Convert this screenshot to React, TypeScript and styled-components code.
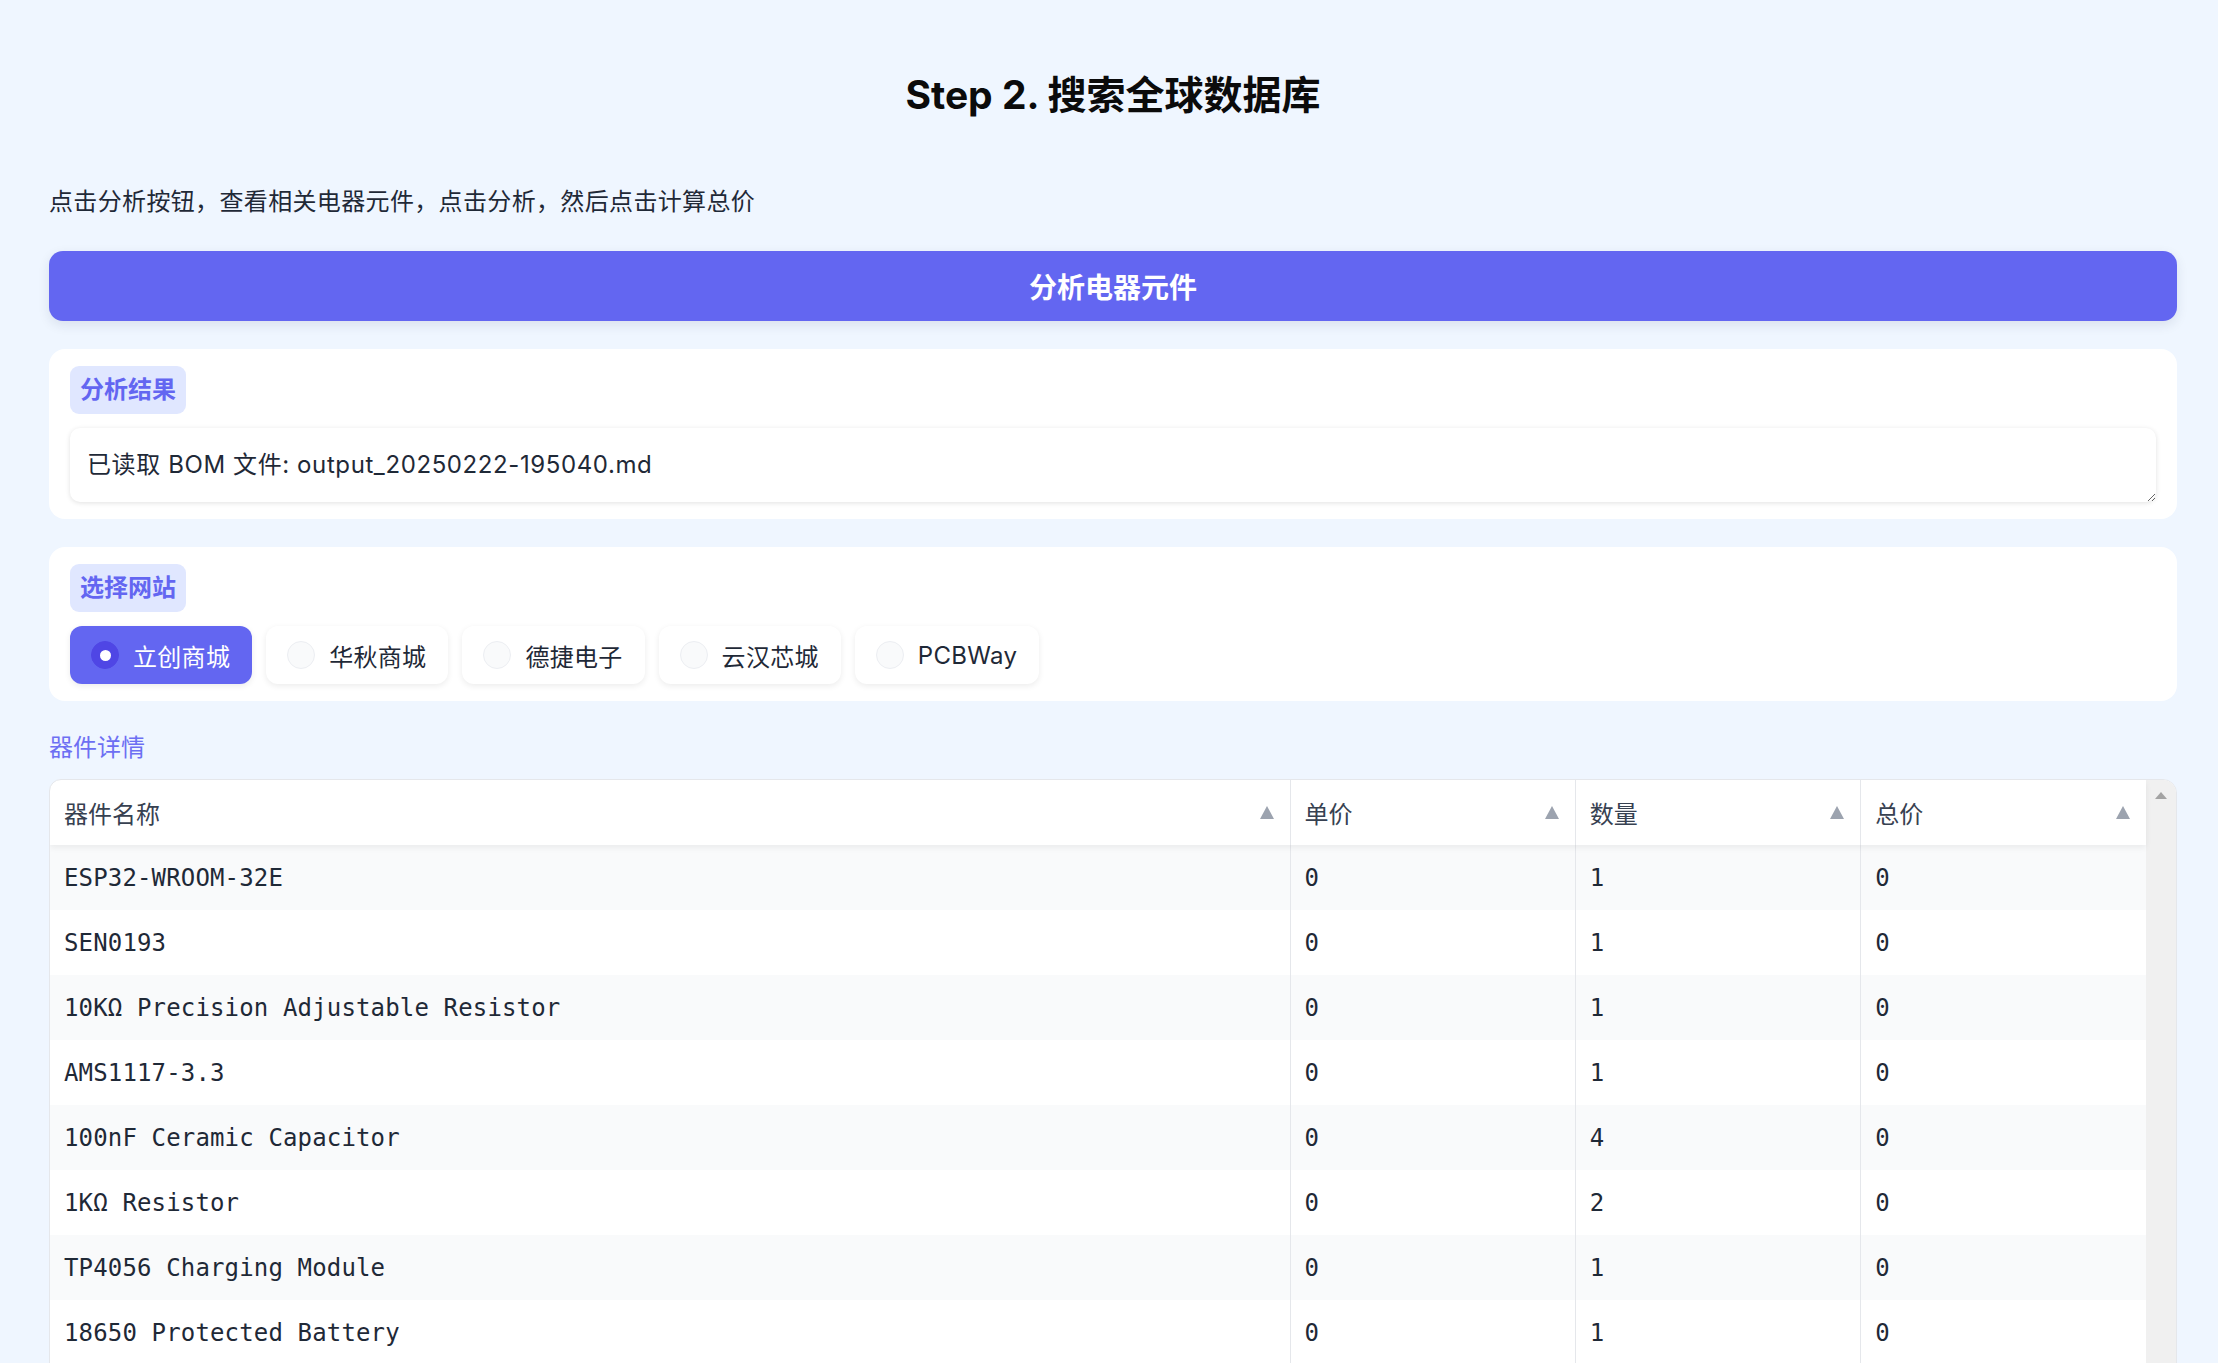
import styled, { createGlobalStyle } from "styled-components";

const GlobalStyle = createGlobalStyle`
  html, body {
    margin: 0;
    padding: 0;
    overflow: hidden;
    background: #eff6ff;
  }
  body {
    font-family: Inter, "Noto Sans CJK SC", sans-serif;
    color: #1f2937;
  }
  * {
    box-sizing: border-box;
  }
`;

const Page = styled.div`
  padding: 71px 41px 0 49px;
`;

const Title = styled.h1`
  margin: 0;
  text-align: center;
  font-size: 39px;
  line-height: 48px;
  font-weight: 700;
  color: #0b0b0b;
`;

const Intro = styled.p`
  margin: 67px 0 0;
  font-size: 24px;
  line-height: 32px;
  letter-spacing: 0.35px;
  color: #1f2937;
`;

const AnalyzeButton = styled.button`
  display: block;
  width: 100%;
  height: 70px;
  margin-top: 33px;
  border: none;
  border-radius: 14px;
  background: #6366f1;
  color: #fff;
  font-family: Inter, "Noto Sans CJK SC", sans-serif;
  font-size: 28px;
  font-weight: 700;
  box-shadow: 0 4px 12px rgba(30, 41, 80, 0.1);
`;

const Card = styled.section`
  margin-top: 28px;
  background: #fff;
  border-radius: 16px;
  padding: 17px 21px;
  display: flex;
  flex-direction: column;
  align-items: flex-start;
  gap: 14px;
`;

const Badge = styled.span`
  display: inline-block;
  height: 48px;
  line-height: 48px;
  padding: 0 10px;
  border-radius: 9px;
  background: #e0e7ff;
  color: #6366f1;
  font-size: 24px;
  font-weight: 700;
`;

const ResultBox = styled.textarea`
  width: 100%;
  height: 74px;
  padding: 21px 17px;
  border: none;
  border-radius: 10px;
  background: #fff;
  box-shadow: 0 1px 5px rgba(0, 0, 0, 0.12);
  font-family: Inter, "Noto Sans CJK SC", sans-serif;
  font-size: 24px;
  line-height: 32px;
  letter-spacing: 0.6px;
  color: #1f2937;
  resize: vertical;
  outline: none;
  overflow: hidden;
`;

const ChipRow = styled.div`
  display: flex;
  gap: 14px;
`;

const Chip = styled.label<{ $active: boolean }>`
  display: flex;
  align-items: center;
  gap: 14px;
  height: 58px;
  padding: 0 22px 0 21px;
  border-radius: 12px;
  background: ${(p) => (p.$active ? "#6366f1" : "#fff")};
  color: ${(p) => (p.$active ? "#fff" : "#1f2937")};
  box-shadow: 0 2px 6px rgba(0, 0, 0, 0.08);
  font-size: 24px;
  letter-spacing: 0.3px;
`;

const Dot = styled.span<{ $active: boolean }>`
  width: 28px;
  height: 28px;
  border-radius: 50%;
  display: flex;
  align-items: center;
  justify-content: center;
  background: ${(p) => (p.$active ? "#4f46e5" : "#f9fafb")};
  border: 1px solid ${(p) => (p.$active ? "#4f46e5" : "#eceef2")};
  &::after {
    content: "";
    width: 11px;
    height: 11px;
    border-radius: 50%;
    background: #fff;
    display: ${(p) => (p.$active ? "block" : "none")};
  }
`;

const SectionLabel = styled.div`
  margin-top: 31px;
  font-size: 24px;
  line-height: 32px;
  color: #6d6ff3;
`;

const TableFrame = styled.div`
  margin-top: 15px;
  display: flex;
  border: 1px solid #e5e7eb;
  border-radius: 12px 14px 0 0;
  overflow: hidden;
  background: #fff;
`;

const TableArea = styled.div`
  flex: 1;
`;

const Grid = styled.table`
  width: 100%;
  border-collapse: collapse;
  table-layout: fixed;
`;

const HeadRow = styled.tr`
  box-shadow: 0 3px 6px rgba(0, 0, 0, 0.06);
  position: relative;
`;

const HeadCell = styled.th`
  height: 65px;
  padding: 0 16px 0 14px;
  text-align: left;
  font-weight: 400;
  font-size: 24px;
  color: #374151;
  font-family: "Noto Sans CJK SC", sans-serif;
  border-left: 1px solid #e5e7eb;
  &:first-child {
    border-left: none;
  }
`;

const HeadInner = styled.div`
  display: flex;
  align-items: center;
  justify-content: space-between;
`;

const SortArrow = styled.span`
  width: 0;
  height: 0;
  border-left: 7.5px solid transparent;
  border-right: 7.5px solid transparent;
  border-bottom: 13px solid #9ca3af;
`;

const BodyRow = styled.tr<{ $striped: boolean }>`
  background: ${(p) => (p.$striped ? "#f9fafb" : "#fff")};
`;

const Cell = styled.td`
  height: 65px;
  padding: 0 14px;
  font-family: "DejaVu Sans Mono", "Liberation Mono", monospace;
  font-size: 24px;
  letter-spacing: 0.15px;
  color: #1f2937;
  border-left: 1px solid #e5e7eb;
  white-space: nowrap;
  &:first-child {
    border-left: none;
  }
`;

const ScrollTrack = styled.div`
  width: 30px;
  background: #f0f0f0;
  display: flex;
  justify-content: center;
  padding-top: 12px;
`;

const TrackArrow = styled.span`
  width: 0;
  height: 0;
  border-left: 6.5px solid transparent;
  border-right: 6.5px solid transparent;
  border-bottom: 7px solid #a3a3a3;
`;

const sites = ["立创商城", "华秋商城", "德捷电子", "云汉芯城", "PCBWay"];

const columns = ["器件名称", "单价", "数量", "总价"];

const parts = [
  { name: "ESP32-WROOM-32E", price: 0, qty: 1, total: 0 },
  { name: "SEN0193", price: 0, qty: 1, total: 0 },
  { name: "10KΩ Precision Adjustable Resistor", price: 0, qty: 1, total: 0 },
  { name: "AMS1117-3.3", price: 0, qty: 1, total: 0 },
  { name: "100nF Ceramic Capacitor", price: 0, qty: 4, total: 0 },
  { name: "1KΩ Resistor", price: 0, qty: 2, total: 0 },
  { name: "TP4056 Charging Module", price: 0, qty: 1, total: 0 },
  { name: "18650 Protected Battery", price: 0, qty: 1, total: 0 },
];

function App() {
  return (
    <>
      <GlobalStyle />
      <Page>
        <Title>Step 2. 搜索全球数据库</Title>
        <Intro>点击分析按钮，查看相关电器元件，点击分析，然后点击计算总价</Intro>
        <AnalyzeButton>分析电器元件</AnalyzeButton>

        <Card>
          <Badge>分析结果</Badge>
          <ResultBox
            readOnly
            rows={1}
            value="已读取 BOM 文件: output_20250222-195040.md"
          />
        </Card>

        <Card>
          <Badge>选择网站</Badge>
          <ChipRow>
            {sites.map((site, i) => (
              <Chip key={site} $active={i === 0}>
                <Dot $active={i === 0} />
                {site}
              </Chip>
            ))}
          </ChipRow>
        </Card>

        <SectionLabel>器件详情</SectionLabel>
        <TableFrame>
          <TableArea>
            <Grid>
              <colgroup>
                <col style={{ width: 1240 }} />
                <col />
                <col />
                <col />
              </colgroup>
              <thead>
                <HeadRow>
                  {columns.map((c) => (
                    <HeadCell key={c}>
                      <HeadInner>
                        {c}
                        <SortArrow />
                      </HeadInner>
                    </HeadCell>
                  ))}
                </HeadRow>
              </thead>
              <tbody>
                {parts.map((p, i) => (
                  <BodyRow key={p.name} $striped={i % 2 === 0}>
                    <Cell>{p.name}</Cell>
                    <Cell>{p.price}</Cell>
                    <Cell>{p.qty}</Cell>
                    <Cell>{p.total}</Cell>
                  </BodyRow>
                ))}
              </tbody>
            </Grid>
          </TableArea>
          <ScrollTrack>
            <TrackArrow />
          </ScrollTrack>
        </TableFrame>
      </Page>
    </>
  );
}

export default App;
